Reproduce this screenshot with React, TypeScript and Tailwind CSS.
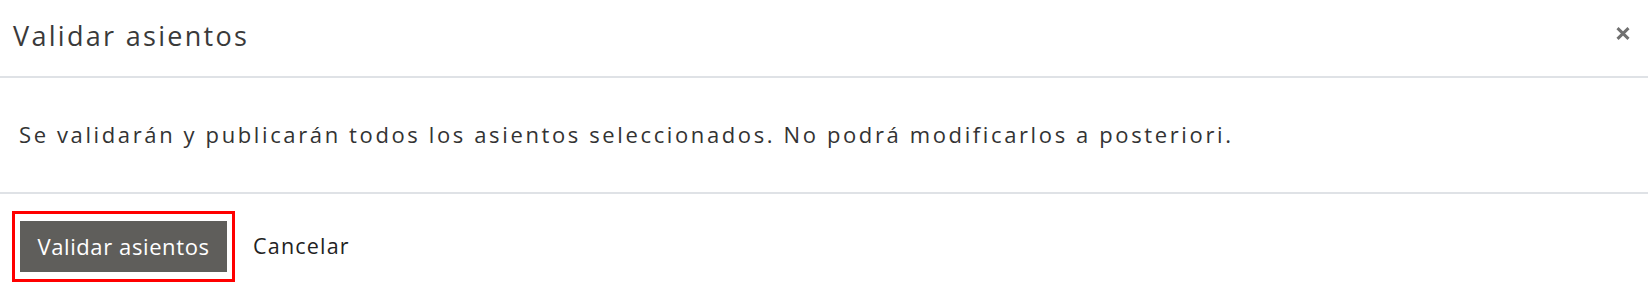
import React from "react";

export default function App() {
  return (
    <div className="w-[1648px] h-[302px] bg-white overflow-hidden" style={{ fontFamily: '"Open Sans", "Liberation Sans", sans-serif' }}>
      <div className="h-[78px] flex items-start justify-between pl-[13px] pr-[18px] border-b-2 border-[#dfe2e6]">
        <h1 className="pt-[18px] text-[27px] leading-[36px] tracking-[2.3px] text-[#3a3a3a] font-medium">
          Validar asientos
        </h1>
        <button className="mt-[27px] w-[14px] h-[13px] flex items-center justify-center" aria-label="Cerrar">
          <svg width="14" height="13" viewBox="0 0 14 13">
            <path d="M1.5 1.2 L12.5 11.8 M12.5 1.2 L1.5 11.8" stroke="#707070" strokeWidth="3" strokeLinecap="butt" />
          </svg>
        </button>
      </div>
      <div className="h-[116px] pt-[42px] pl-[19px] border-b-2 border-[#dfe2e6]">
        <p className="text-[22px] leading-[28px] tracking-[2.62px] text-[#333333] font-medium">
          Se validarán y publicarán todos los asientos seleccionados. No podrá modificarlos a posteriori.
        </p>
      </div>
      <div className="flex items-center pt-[17px] pl-[12px]">
        <div className="border-[3px] border-[#ff0000] px-[5px] py-[7px]">
          <button className="w-[207px] h-[51px] bg-[#5f5e5b] text-white text-[22px] tracking-[0.6px] flex items-center justify-center">
            Validar asientos
          </button>
        </div>
        <button className="ml-[18px] text-[21.5px] tracking-[1.2px] text-[#222222]">Cancelar</button>
      </div>
    </div>
  );
}
